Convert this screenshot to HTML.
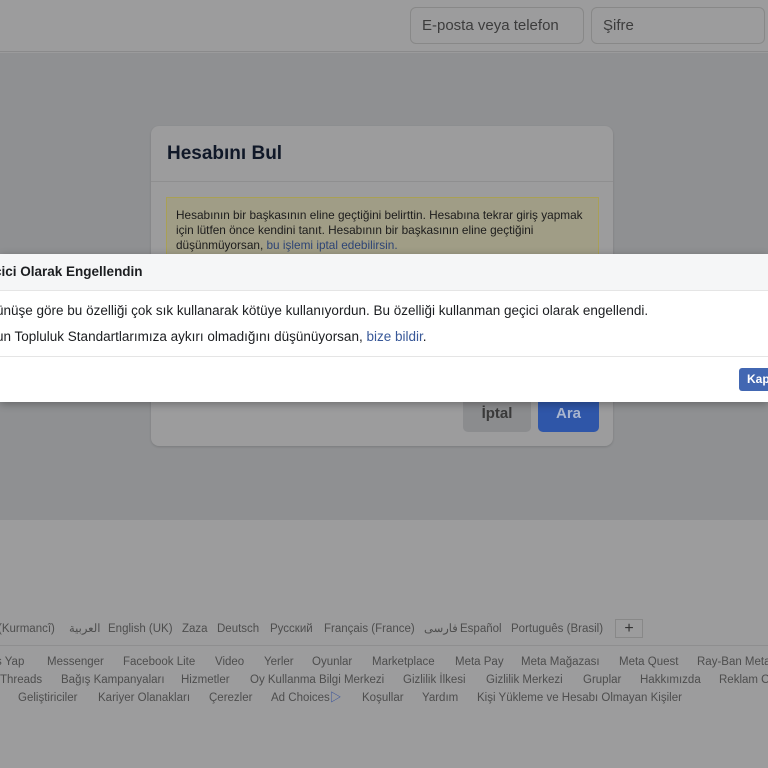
<!DOCTYPE html>
<html><head><meta charset="utf-8"><style>
*{margin:0;padding:0;box-sizing:border-box}
body{width:768px;height:768px;overflow:hidden;position:relative;background:#9b9b9c;font-family:"Liberation Sans","Noto Sans CJK JP",sans-serif}
.hdr{position:absolute;left:0;top:0;width:768px;height:52px;background:#9c9c9d;border-bottom:1px solid #8a8a8b}
.inp{position:absolute;top:7px;height:37px;border:1px solid #888;border-radius:6px;font-size:15px;color:#3c3c3c;padding:9px 11px}
.main{position:absolute;left:0;top:53px;width:768px;height:467px;background:#8f9092}
.card{position:absolute;left:151px;top:126px;width:462px;height:320px;background:#9c9c9d;border-radius:8px;box-shadow:0 1px 2px rgba(0,0,0,.15)}
.card h1{font-size:19px;color:#101828;font-weight:bold;position:absolute;left:16px;top:17px}
.card .div{position:absolute;left:0;top:55px;width:462px;height:1px;background:#8f8f90}
.yel{position:absolute;left:15px;top:71px;width:433px;height:70px;background:#a09d86;border:1px solid #a9a055;font-size:11.8px;color:#1c1c1c;line-height:15px;padding:10px 9px}
.yel a{color:#2d4475}
.btn{position:absolute;top:270px;height:36px;border-radius:5px;font-weight:bold;font-size:15px;text-align:center;line-height:36px}
.dlg{position:absolute;left:0;top:254px;width:768px;height:148px;background:#fff;box-shadow:0 2px 8px rgba(0,0,0,.3);overflow:hidden}
.dh{height:37px;background:#f5f6f7;border-bottom:1px solid #e5e5e5;font-size:13.5px;font-weight:bold;color:#1c1e21;padding:10px 0 0 0;text-indent:-6px}
.dlg p{position:absolute;left:-4px;font-size:13.5px;color:#1c1e21;white-space:nowrap}
.dlg a{color:#385898}
.df{position:absolute;left:0;top:102px;width:768px;height:1px;background:#e5e5e5}
.kap{position:absolute;left:739px;top:114px;width:40px;height:23px;background:#4267b2;border-radius:3px;color:#fff;font-weight:bold;font-size:12px;line-height:23px;padding-left:8px}
.ft{position:absolute;left:0;top:520px;width:768px;height:248px;background:#9c9c9d;font-size:11.5px;color:#4d4d4d;overflow:hidden}
.row{position:absolute;white-space:nowrap}
.row span{position:absolute;top:0;line-height:16px}
</style></head><body>
<div class="hdr">
<div class="inp" style="left:410px;width:174px">E-posta veya telefon</div>
<div class="inp" style="left:591px;width:174px">Şifre</div>
</div>
<div class="main"></div>
<div class="card">
<h1>Hesabını Bul</h1>
<div class="div"></div>
<div class="yel">Hesabının bir başkasının eline geçtiğini belirttin. Hesabına tekrar giriş yapmak için lütfen önce kendini tanıt. Hesabının bir başkasının eline geçtiğini düşünmüyorsan, <a>bu işlemi iptal edebilirsin.</a></div>
<div class="btn" style="left:312px;width:68px;background:#8b8c8e;color:#3a3a3a">İptal</div>
<div class="btn" style="left:387px;width:61px;background:#2f56a8;color:#aab6cf">Ara</div>
</div>
<div class="dlg">
<div class="dh">çici Olarak Engellendin</div>
<p style="top:49px">ünüşe göre bu özelliği çok sık kullanarak kötüye kullanıyordun. Bu özelliği kullanman geçici olarak engellendi.</p>
<p style="top:75px">un Topluluk Standartlarımıza aykırı olmadığını düşünüyorsan, <a>bize bildir</a>.</p>
<div class="df"></div>
<div class="kap">Kapat</div>
</div>
<div class="ft">
<div class="row" style="left:0;top:101px;width:768px;height:16px">
<span style="left:-2px">(Kurmancî)</span><span style="left:69px">العربية</span><span style="left:108px">English (UK)</span><span style="left:182px">Zaza</span><span style="left:217px">Deutsch</span><span style="left:270px">Русский</span><span style="left:324px">Français (France)</span><span style="left:424px">فارسی</span><span style="left:460px">Español</span><span style="left:511px">Português (Brasil)</span></div>
<div style="position:absolute;left:615px;top:99px;width:28px;height:19px;border:1px solid #888;text-align:center;font-size:16px;line-height:17px;color:#333">+</div>
<div style="position:absolute;left:0;top:125px;width:768px;height:1px;background:#8e8e8f"></div>
<div class="row" style="left:0;top:134px;width:768px;height:16px">
<span style="left:-4px">ş Yap</span><span style="left:47px">Messenger</span><span style="left:123px">Facebook Lite</span><span style="left:215px">Video</span><span style="left:264px">Yerler</span><span style="left:312px">Oyunlar</span><span style="left:372px">Marketplace</span><span style="left:455px">Meta Pay</span><span style="left:521px">Meta Mağazası</span><span style="left:619px">Meta Quest</span><span style="left:697px">Ray-Ban Meta</span></div>
<div class="row" style="left:0;top:152px;width:768px;height:16px">
<span style="left:0">Threads</span><span style="left:61px">Bağış Kampanyaları</span><span style="left:181px">Hizmetler</span><span style="left:250px">Oy Kullanma Bilgi Merkezi</span><span style="left:403px">Gizlilik İlkesi</span><span style="left:486px">Gizlilik Merkezi</span><span style="left:583px">Gruplar</span><span style="left:640px">Hakkımızda</span><span style="left:719px">Reklam Oluştur</span></div>
<div class="row" style="left:0;top:170px;width:768px;height:16px">
<span style="left:18px">Geliştiriciler</span><span style="left:98px">Kariyer Olanakları</span><span style="left:209px">Çerezler</span><span style="left:271px">Ad Choices<b style="color:#2d4a9a;font-weight:normal">▷</b></span><span style="left:362px">Koşullar</span><span style="left:422px">Yardım</span><span style="left:477px">Kişi Yükleme ve Hesabı Olmayan Kişiler</span></div>
</div>
</body></html>
